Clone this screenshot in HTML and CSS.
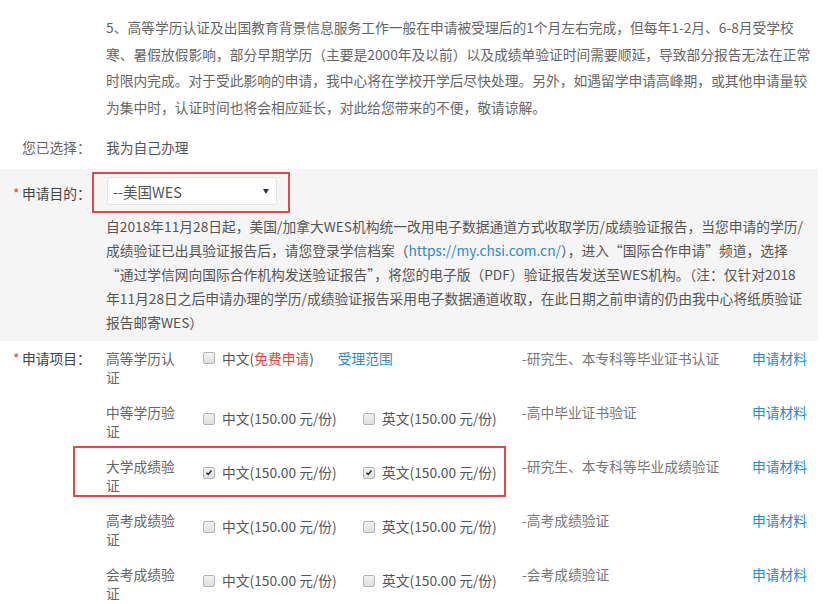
FILE: index.html
```html
<!DOCTYPE html>
<html lang="zh-CN">
<head>
<meta charset="utf-8">
<title>申请</title>
<link rel="stylesheet" href="styles.css">
</head>
<body>
<div class="page">
  <p class="notice">5、高等学历认证及出国教育背景信息服务工作一般在申请被受理后的1个月左右完成，但每年1-2月、6-8月受学校<br>寒、暑假放假影响，部分早期学历（主要是2000年及以前）以及成绩单验证时间需要顺延，导致部分报告无法在正常<br>时限内完成。对于受此影响的申请，我中心将在学校开学后尽快处理。另外，如遇留学申请高峰期，或其他申请量较<br>为集中时，认证时间也将会相应延长，对此给您带来的不便，敬请谅解。</p>

  <div class="field chosen">
    <span class="label plain">您已选择：</span>
    <span class="value">我为自己办理</span>
  </div>

  <div class="band">
    <div class="field purpose">
      <span class="label"><span class="req">*</span>申请目的：</span>
      <div class="mark-box">
        <div class="select"><span>--美国WES</span><span class="caret"></span></div>
      </div>
    </div>
    <p class="wes-note">自2018年11月28日起，美国/加拿大WES机构统一改用电子数据通道方式收取学历/成绩验证报告，当您申请的学历/<br>成绩验证已出具验证报告后，请您登录学信档案（<a class="link">https://my.chsi.com.cn/</a>），进入“国际合作申请”频道，选择<br>“通过学信网向国际合作机构发送验证报告”，将您的电子版（PDF）验证报告发送至WES机构。（注：仅针对2018<br>年11月28日之后申请办理的学历/成绩验证报告采用电子数据通道收取，在此日期之前申请的仍由我中心将纸质验证<br>报告邮寄WES）</p>
  </div>

  <div class="field items">
    <span class="label"><span class="req">*</span>申请项目：</span>
    <div class="item-list">
      <div class="item">
        <span class="item-name">高等学历认证</span>
        <div class="opts span2">
          <label class="opt"><span class="cb"></span>中文(<span class="free">免费申请</span>)</label>
          <a class="link scope">受理范围</a>
        </div>
        <span class="desc">-研究生、本专科等毕业证书认证</span>
        <a class="link">申请材料</a>
      </div>

      <div class="item">
        <span class="item-name">中等学历验证</span>
        <div class="opts low"><label class="opt"><span class="cb"></span>中文(150.00 元/份)</label></div>
        <div class="opts low"><label class="opt"><span class="cb"></span>英文(150.00 元/份)</label></div>
        <span class="desc">-高中毕业证书验证</span>
        <a class="link">申请材料</a>
      </div>

      <div class="item marked">
        <span class="item-name">大学成绩验证</span>
        <div class="opts low"><label class="opt"><span class="cb on"><svg viewBox="0 0 12 12"><path d="M3 6.3 L5.1 8.4 L9 3.6"/></svg></span>中文(150.00 元/份)</label></div>
        <div class="opts low"><label class="opt"><span class="cb on"><svg viewBox="0 0 12 12"><path d="M3 6.3 L5.1 8.4 L9 3.6"/></svg></span>英文(150.00 元/份)</label></div>
        <span class="desc">-研究生、本专科等毕业成绩验证</span>
        <a class="link">申请材料</a>
        <div class="mark"></div>
      </div>

      <div class="item">
        <span class="item-name">高考成绩验证</span>
        <div class="opts low"><label class="opt"><span class="cb"></span>中文(150.00 元/份)</label></div>
        <div class="opts low"><label class="opt"><span class="cb"></span>英文(150.00 元/份)</label></div>
        <span class="desc">-高考成绩验证</span>
        <a class="link">申请材料</a>
      </div>

      <div class="item">
        <span class="item-name">会考成绩验证</span>
        <div class="opts low"><label class="opt"><span class="cb"></span>中文(150.00 元/份)</label></div>
        <div class="opts low"><label class="opt"><span class="cb"></span>英文(150.00 元/份)</label></div>
        <span class="desc">-会考成绩验证</span>
        <a class="link">申请材料</a>
      </div>
    </div>
  </div>
</div>
</body>
</html>
```

FILE: styles.css
```css
html, body {
  margin: 0;
  padding: 0;
  background: #fff;
  overflow: hidden;
}

body {
  font-family: "Noto Sans CJK SC", sans-serif;
  font-size: 13.75px;
  color: #555;
}

.page {
  width: 818px;
}

.notice {
  margin: 0;
  padding: 14px 0 0 106px;
  line-height: 26.5px;
  color: #666;
  white-space: nowrap;
}

.field {
  display: grid;
  grid-template-columns: 106px 1fr;
}

.label {
  padding-left: 13px;
  color: #444;
  white-space: nowrap;
}

.label.plain {
  padding-left: 22px;
  color: #666;
}

.req {
  display: inline-block;
  width: 9px;
  color: #e8453c;
}

.chosen {
  margin-top: 14px;
  line-height: 26px;
}

.chosen .value {
  color: #555;
}

.band {
  margin-top: 9px;
  padding: 3px 0 7px;
  background: #f5f5f5;
}

.purpose {
  align-items: center;
}

.mark-box {
  justify-self: start;
  margin-left: -14px;
  padding: 3px 11px 6px 13px;
  border: 2px solid #e2484a;
}

.select {
  box-sizing: border-box;
  width: 170px;
  height: 28px;
  display: flex;
  align-items: center;
  justify-content: space-between;
  padding: 0 7px 0 5px;
  background: #fff;
  border: 1px solid #e6e6e6;
  border-radius: 3px;
  color: #555;
  font-size: 14.5px;
}

.caret {
  width: 0;
  height: 0;
  border-left: 3px solid transparent;
  border-right: 3px solid transparent;
  border-top: 5px solid #333;
}

.wes-note {
  margin: 1px 0 0;
  padding-left: 106px;
  line-height: 24px;
  color: #555;
  white-space: nowrap;
}

.link {
  color: #2a8bcb;
  text-decoration: none;
}

.items {
  padding-top: 7.5px;
  line-height: 19px;
  align-items: start;
}

.item-list {
  display: flex;
  flex-direction: column;
  gap: 16px;
}

.item {
  position: relative;
  display: grid;
  grid-template-columns: 97px 160px 159px 230px auto;
  align-items: start;
  min-height: 38px;
}

.item-name {
  width: 70px;
  color: #666;
}

.opts {
  display: flex;
  align-items: center;
  white-space: nowrap;
}

.opts.span2 {
  grid-column: span 2;
}

.opts.low {
  padding-top: 6.5px;
}

.opt {
  display: flex;
  align-items: center;
  color: #555;
}

.cb {
  box-sizing: border-box;
  width: 12px;
  height: 12px;
  margin-right: 7px;
  border: 1px solid #b4b4b4;
  border-radius: 2px;
  background: linear-gradient(#f2f2f2, #dedede);
  display: flex;
  align-items: center;
  justify-content: center;
}

.cb svg {
  width: 11px;
  height: 11px;
}

.cb svg path {
  fill: none;
  stroke: #222;
  stroke-width: 1.7;
}

.free {
  color: #e8453c;
}

.scope {
  margin-left: 24px;
}

.desc {
  color: #777;
  white-space: nowrap;
}

.mark {
  position: absolute;
  left: -33px;
  top: -10.5px;
  width: 433px;
  height: 51px;
  box-sizing: border-box;
  border: 2px solid #e2484a;
  pointer-events: none;
}
```
